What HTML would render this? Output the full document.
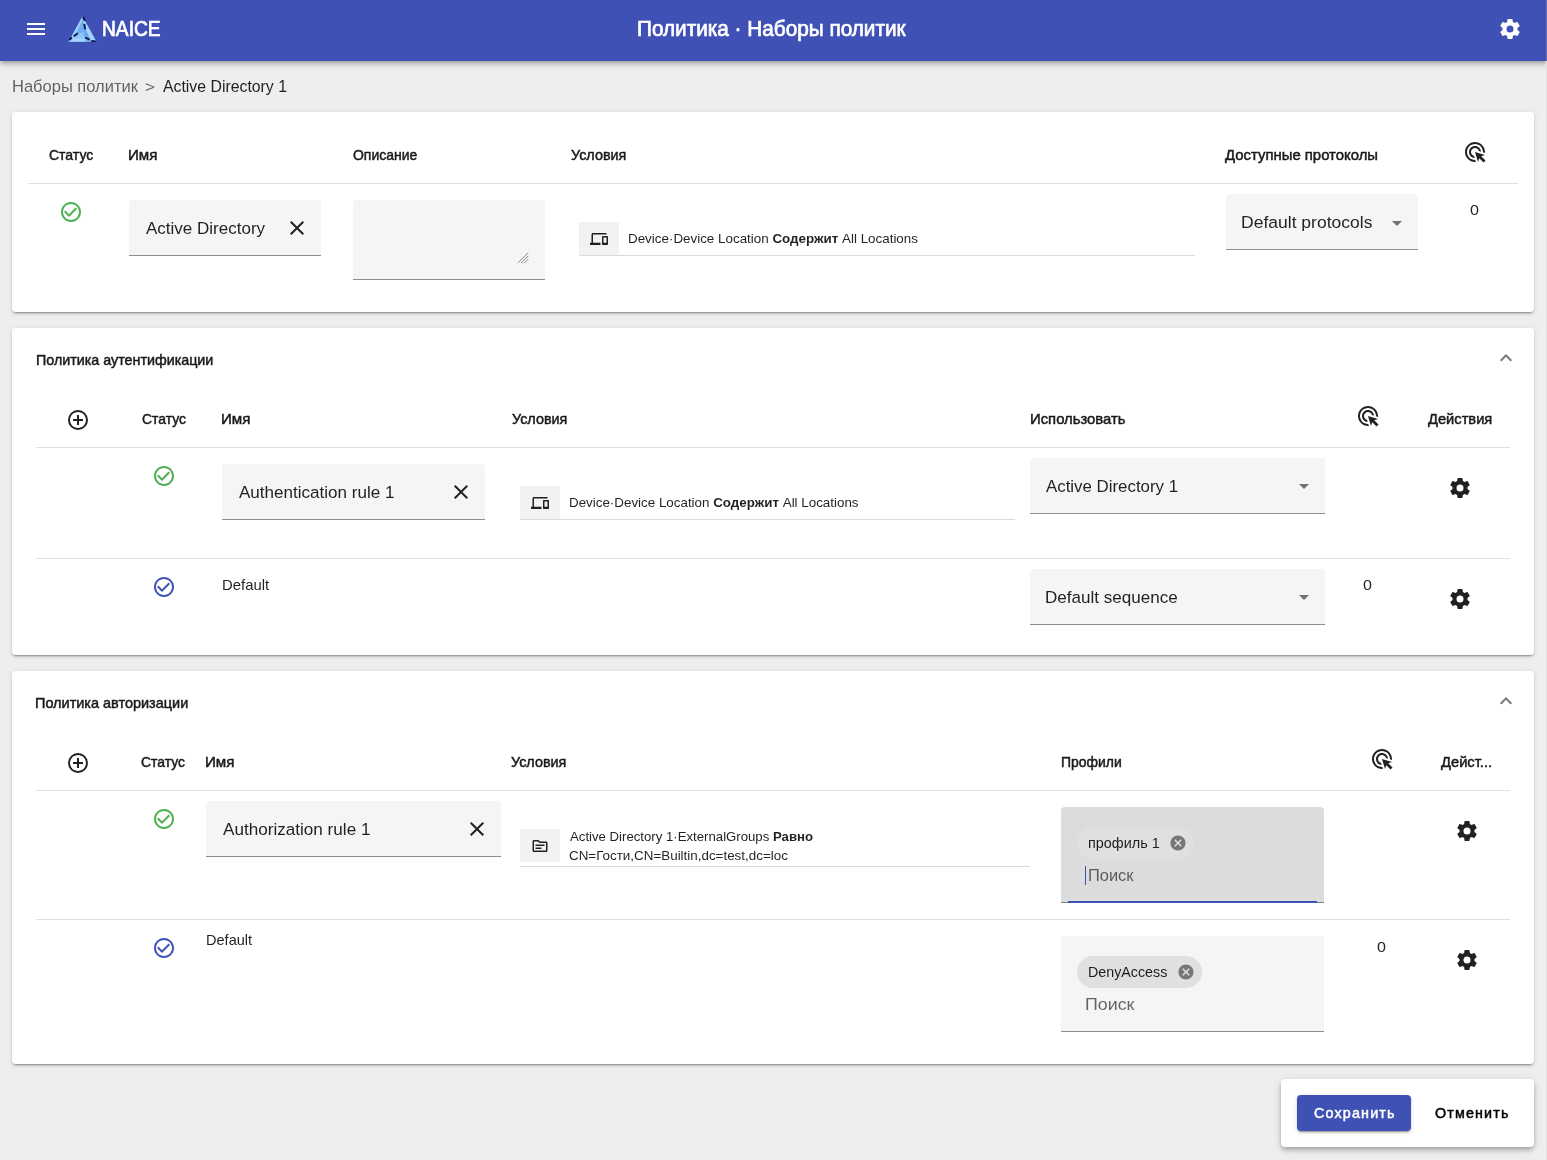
<!DOCTYPE html><html><head><meta charset="utf-8"><style>
html,body{margin:0;padding:0;width:1547px;height:1160px;overflow:hidden;background:#eeeeee;font-family:"Liberation Sans", sans-serif;}
.t{position:absolute;white-space:nowrap;line-height:1;transform-origin:0 0;}
.card{position:absolute;background:#fff;border-radius:4px;box-shadow:0 3px 1px -2px rgba(0,0,0,.2),0 2px 2px 0 rgba(0,0,0,.14),0 1px 5px 0 rgba(0,0,0,.12);}
.fld{position:absolute;background:#f5f5f5;border-radius:4px 4px 0 0;border-bottom:1px solid rgba(0,0,0,.42);box-sizing:border-box;}
.hr{position:absolute;height:1px;background:rgba(0,0,0,.12);}
#root{position:absolute;left:0;top:0;width:1547px;height:1160px;will-change:transform;}
</style></head><body><div id="root">
<div style="position:absolute;left:0;top:0;width:1547px;height:61px;background:#3f51b5;box-shadow:0 2px 4px -1px rgba(0,0,0,.2),0 4px 5px 0 rgba(0,0,0,.14),0 1px 10px 0 rgba(0,0,0,.12);"></div>
<svg style="position:absolute;left:24.00px;top:17.00px" width="24" height="24" viewBox="0 0 24 24"><path fill="#fff" d="M3,6H21V8H3V6M3,11H21V13H3V11M3,16H21V18H3V16Z"/></svg>
<div style="position:absolute;left:1546px;top:0;width:1px;height:61px;background:#6570bb"></div><div style="position:absolute;left:1546px;top:61px;width:1px;height:1099px;background:#e2e2e2"></div>
<svg style="position:absolute;left:64px;top:12px" width="36" height="34" viewBox="64 12 36 34">
<polygon points="82.5,16.2 68.5,41.7 96.4,41.5" fill="#a3d3ff"/>
<polygon points="82.6,19 75.5,34.5 83.5,32.6 85.5,29" fill="#74aef2"/>
<polygon points="83.5,32.6 75.5,34.5 72.5,38.5 85.2,38.8" fill="#8ec4fb"/>
<polygon points="72.5,38.5 85.2,38.8 85.6,41.6 69.5,41.6" fill="#a6d6ff"/>
<polygon points="85.5,29 83.5,32.6 85.2,38.8 90.5,39.8" fill="#6aa5ef"/>
<polygon points="85.2,38.8 90.5,39.8 93,41.5 85.6,41.6" fill="#74aef2"/>
<g stroke="#08144a" stroke-width="1.9" stroke-linecap="butt">
<line x1="82.9" y1="17" x2="85" y2="20.8"/>
<line x1="84.3" y1="23.8" x2="85.1" y2="29.3"/>
<line x1="73.7" y1="36.3" x2="77.8" y2="33.2"/>
<line x1="69.4" y1="40" x2="71.9" y2="37.4"/>
<line x1="85.2" y1="37.5" x2="89.5" y2="39.6"/>
<line x1="91.3" y1="40.9" x2="95.8" y2="41.4"/>
</g></svg>
<div id="t0" class="t" style="left:101.77px;top:17.72px;font-size:21.6px;font-weight:400;color:#fff;-webkit-text-stroke:0.72px #fff;transform:scaleX(0.8879);">NAICE</div>
<div id="t1" class="t" style="left:637.34px;top:17.72px;font-size:21.6px;font-weight:400;color:#fff;-webkit-text-stroke:0.72px #fff;transform:scaleX(0.9607);">Политика · Наборы политик</div>
<svg style="position:absolute;left:1498.00px;top:17.00px" width="24" height="24" viewBox="0 0 24 24"><path fill="#fff" d="M12,15.5A3.5,3.5 0 0,1 8.5,12A3.5,3.5 0 0,1 12,8.5A3.5,3.5 0 0,1 15.5,12A3.5,3.5 0 0,1 12,15.5M19.43,12.97C19.47,12.65 19.5,12.33 19.5,12C19.5,11.67 19.47,11.34 19.43,11L21.54,9.37C21.73,9.22 21.78,8.95 21.66,8.73L19.66,5.27C19.54,5.05 19.27,4.96 19.05,5.05L16.56,6.05C16.04,5.66 15.5,5.32 14.87,5.07L14.5,2.42C14.46,2.18 14.25,2 14,2H10C9.75,2 9.54,2.18 9.5,2.42L9.13,5.07C8.5,5.32 7.96,5.66 7.44,6.05L4.95,5.05C4.73,4.96 4.46,5.05 4.34,5.27L2.34,8.73C2.21,8.95 2.27,9.22 2.46,9.37L4.57,11C4.53,11.34 4.5,11.67 4.5,12C4.5,12.33 4.53,12.65 4.57,12.97L2.46,14.63C2.27,14.78 2.21,15.05 2.34,15.27L4.34,18.73C4.46,18.95 4.73,19.03 4.95,18.95L7.44,17.94C7.96,18.34 8.5,18.68 9.13,18.93L9.5,21.58C9.54,21.82 9.75,22 10,22H14C14.25,22 14.46,21.82 14.5,21.58L14.87,18.93C15.5,18.67 16.04,18.34 16.56,17.94L19.05,18.95C19.27,19.03 19.54,18.95 19.66,18.73L21.66,15.27C21.78,15.05 21.73,14.78 21.54,14.63L19.43,12.97Z"/></svg>
<div id="t2" class="t" style="left:11.67px;top:77.90px;font-size:16.3px;font-weight:400;color:rgba(0,0,0,.6);transform:scaleX(1.0132);">Наборы политик</div>
<div id="t3" class="t" style="left:144.86px;top:79.00px;font-size:15px;font-weight:400;color:rgba(0,0,0,.6);transform:scaleX(1.1429);">&gt;</div>
<div id="t4" class="t" style="left:162.61px;top:77.90px;font-size:16.3px;font-weight:400;color:rgba(0,0,0,.87);transform:scaleX(0.9717);">Active Directory 1</div>
<div class="card" style="left:12px;top:112px;width:1522px;height:200px"></div>
<div id="t5" class="t" style="left:48.63px;top:147.10px;font-size:15px;font-weight:400;color:rgba(0,0,0,.87);-webkit-text-stroke:0.50px rgba(0,0,0,.87);transform:scaleX(0.9331);">Статус</div>
<div id="t6" class="t" style="left:128.28px;top:147.10px;font-size:15px;font-weight:400;color:rgba(0,0,0,.87);-webkit-text-stroke:0.50px rgba(0,0,0,.87);transform:scaleX(1.0085);">Имя</div>
<div id="t7" class="t" style="left:353.21px;top:147.10px;font-size:15px;font-weight:400;color:rgba(0,0,0,.87);-webkit-text-stroke:0.50px rgba(0,0,0,.87);transform:scaleX(0.9305);">Описание</div>
<div id="t8" class="t" style="left:570.71px;top:147.10px;font-size:15px;font-weight:400;color:rgba(0,0,0,.87);-webkit-text-stroke:0.50px rgba(0,0,0,.87);transform:scaleX(0.9578);">Условия</div>
<div id="t9" class="t" style="left:1225.49px;top:147.10px;font-size:15px;font-weight:400;color:rgba(0,0,0,.87);-webkit-text-stroke:0.50px rgba(0,0,0,.87);transform:scaleX(0.9925);">Доступные протоколы</div>
<svg style="position:absolute;left:1463.00px;top:140.40px" width="24" height="24" viewBox="0 0 24 24"><path fill="rgba(0,0,0,.87)" d="M11.71,17.99C8.53,17.84,6,15.22,6,12c0-3.31,2.69-6,6-6c3.22,0,5.84,2.53,5.99,5.71l-2.1-0.63C15.48,9.31,13.89,8,12,8c-2.21,0-4,1.79-4,4c0,1.89,1.31,3.48,3.08,3.89L11.71,17.99z M22,12c0,0.3-0.01,0.6-0.04,0.9l-1.97-0.59C20,12.2,20,12.1,20,12c0-4.42-3.58-8-8-8s-8,3.58-8,8s3.58,8,8,8c0.1,0,0.2,0,0.31-0.01l0.59,1.97C12.6,21.99,12.3,22,12,22C6.48,22,2,17.52,2,12C2,6.48,6.48,2,12,2S22,6.48,22,12z M18.23,16.26L22,15l-10-3l3,10l1.26-3.77l4.27,4.27l1.98-1.98L18.23,16.26z"/></svg>
<div class="hr" style="left:28px;top:183px;width:1490px"></div>
<svg style="position:absolute;left:59.00px;top:199.50px" width="24" height="24" viewBox="0 0 24 24"><path fill="#4caf50" d="M16.59 7.58L10 14.17l-3.59-3.58L5 12l5 5 8-8zM12 2C6.48 2 2 6.48 2 12s4.48 10 10 10 10-4.48 10-10S17.52 2 12 2zm0 18c-4.42 0-8-3.58-8-8s3.58-8 8-8 8 3.58 8 8-3.58 8-8 8z"/></svg>
<div class="fld" style="left:129px;top:200px;width:192px;height:56px"></div>
<div id="t10" class="t" style="left:145.70px;top:220.78px;font-size:16.8px;font-weight:400;color:rgba(0,0,0,.87);transform:scaleX(1.0136);">Active Directory</div>
<svg style="position:absolute;left:284.70px;top:216.00px" width="24" height="24" viewBox="0 0 24 24"><path fill="rgba(0,0,0,.87)" d="M19,6.41L17.59,5L12,10.59L6.41,5L5,6.41L10.59,12L5,17.59L6.41,19L12,13.41L17.59,19L19,17.59L13.41,12L19,6.41Z"/></svg>
<div class="fld" style="left:353px;top:200px;width:192px;height:80px"></div>
<svg style="position:absolute;left:516px;top:251px" width="14" height="14" viewBox="516 251 14 14"><g stroke="#7a7a7a" stroke-width="0.9"><line x1="517.8" y1="263" x2="528.3" y2="252.6"/><line x1="521.2" y1="263" x2="528.3" y2="255.9"/><line x1="524.5" y1="263" x2="528.3" y2="259.2"/></g></svg>
<div style="position:absolute;left:579px;top:222px;width:40px;height:33px;background:#f1f2f4"></div>
<div class="hr" style="left:579px;top:255px;width:616px;background:rgba(0,0,0,.14)"></div>
<svg style="position:absolute;left:590.00px;top:230.00px" width="18" height="18" viewBox="0 0 24 24"><path fill="rgba(0,0,0,.87)" d="M4 6h18V4H4c-1.1 0-2 .9-2 2v11H0v3h14v-3H4V6zm19 2h-6c-.55 0-1 .45-1 1v10c0 .55.45 1 1 1h6c.55 0 1-.45 1-1V9c0-.55-.45-1-1-1zm-1 9h-4v-7h4v7z"/></svg>
<div id="t11" class="t" style="left:627.91px;top:231.77px;font-size:13.5px;font-weight:400;color:rgba(0,0,0,.87);transform:scaleX(0.9919);">Device·Device Location <b>Содержит</b> All Locations</div>
<div class="fld" style="left:1226px;top:194px;width:192px;height:56px"></div>
<div id="t12" class="t" style="left:1240.94px;top:214.98px;font-size:16.8px;font-weight:400;color:rgba(0,0,0,.87);transform:scaleX(1.0437);">Default protocols</div>
<svg style="position:absolute;left:1385.00px;top:210.50px" width="24" height="24" viewBox="0 0 24 24"><path fill="rgba(0,0,0,.54)" d="M7,10L12,15L17,10H7Z"/></svg>
<div id="t13" class="t" style="left:1470.24px;top:202.10px;font-size:15px;font-weight:400;color:rgba(0,0,0,.87);transform:scaleX(1.0711);">0</div>
<div class="card" style="left:12px;top:328px;width:1522px;height:327px"></div>
<div id="t14" class="t" style="left:35.51px;top:351.90px;font-size:15px;font-weight:400;color:rgba(0,0,0,.87);-webkit-text-stroke:0.50px rgba(0,0,0,.87);transform:scaleX(0.9527);">Политика аутентификации</div>
<svg style="position:absolute;left:1494.00px;top:346.00px" width="24" height="24" viewBox="0 0 24 24"><path fill="rgba(0,0,0,.54)" d="M7.41,15.41L12,10.83L16.59,15.41L18,14L12,8L6,14L7.41,15.41Z"/></svg>
<svg style="position:absolute;left:66.10px;top:408.20px" width="24" height="24" viewBox="0 0 24 24"><path fill="rgba(0,0,0,.87)" d="M12,20C7.59,20 4,16.41 4,12C4,7.59 7.59,4 12,4C16.41,4 20,7.59 20,12C20,16.41 16.41,20 12,20M12,2A10,10 0 0,0 2,12A10,10 0 0,0 12,22A10,10 0 0,0 22,12A10,10 0 0,0 12,2M13,7H11V11H7V13H11V17H13V13H17V11H13V7Z"/></svg>
<div id="t15" class="t" style="left:141.71px;top:411.10px;font-size:15px;font-weight:400;color:rgba(0,0,0,.87);-webkit-text-stroke:0.50px rgba(0,0,0,.87);transform:scaleX(0.9285);">Статус</div>
<div id="t16" class="t" style="left:221.45px;top:411.10px;font-size:15px;font-weight:400;color:rgba(0,0,0,.87);-webkit-text-stroke:0.50px rgba(0,0,0,.87);transform:scaleX(1.0085);">Имя</div>
<div id="t17" class="t" style="left:511.61px;top:411.10px;font-size:15px;font-weight:400;color:rgba(0,0,0,.87);-webkit-text-stroke:0.50px rgba(0,0,0,.87);transform:scaleX(0.9578);">Условия</div>
<div id="t18" class="t" style="left:1030.01px;top:411.10px;font-size:15px;font-weight:400;color:rgba(0,0,0,.87);-webkit-text-stroke:0.50px rgba(0,0,0,.87);transform:scaleX(0.9895);">Использовать</div>
<svg style="position:absolute;left:1355.50px;top:403.50px" width="24" height="24" viewBox="0 0 24 24"><path fill="rgba(0,0,0,.87)" d="M11.71,17.99C8.53,17.84,6,15.22,6,12c0-3.31,2.69-6,6-6c3.22,0,5.84,2.53,5.99,5.71l-2.1-0.63C15.48,9.31,13.89,8,12,8c-2.21,0-4,1.79-4,4c0,1.89,1.31,3.48,3.08,3.89L11.71,17.99z M22,12c0,0.3-0.01,0.6-0.04,0.9l-1.97-0.59C20,12.2,20,12.1,20,12c0-4.42-3.58-8-8-8s-8,3.58-8,8s3.58,8,8,8c0.1,0,0.2,0,0.31-0.01l0.59,1.97C12.6,21.99,12.3,22,12,22C6.48,22,2,17.52,2,12C2,6.48,6.48,2,12,2S22,6.48,22,12z M18.23,16.26L22,15l-10-3l3,10l1.26-3.77l4.27,4.27l1.98-1.98L18.23,16.26z"/></svg>
<div id="t19" class="t" style="left:1428.10px;top:411.10px;font-size:15px;font-weight:400;color:rgba(0,0,0,.87);-webkit-text-stroke:0.50px rgba(0,0,0,.87);transform:scaleX(0.9786);">Действия</div>
<div class="hr" style="left:36px;top:447px;width:1474px"></div>
<svg style="position:absolute;left:151.90px;top:463.60px" width="24" height="24" viewBox="0 0 24 24"><path fill="#4caf50" d="M16.59 7.58L10 14.17l-3.59-3.58L5 12l5 5 8-8zM12 2C6.48 2 2 6.48 2 12s4.48 10 10 10 10-4.48 10-10S17.52 2 12 2zm0 18c-4.42 0-8-3.58-8-8s3.58-8 8-8 8 3.58 8 8-3.58 8-8 8z"/></svg>
<div class="fld" style="left:222px;top:464px;width:263px;height:56px"></div>
<div id="t20" class="t" style="left:238.59px;top:484.78px;font-size:16.8px;font-weight:400;color:rgba(0,0,0,.87);transform:scaleX(1.0159);">Authentication rule 1</div>
<svg style="position:absolute;left:449.00px;top:480.00px" width="24" height="24" viewBox="0 0 24 24"><path fill="rgba(0,0,0,.87)" d="M19,6.41L17.59,5L12,10.59L6.41,5L5,6.41L10.59,12L5,17.59L6.41,19L12,13.41L17.59,19L19,17.59L13.41,12L19,6.41Z"/></svg>
<div style="position:absolute;left:520px;top:486px;width:40px;height:33px;background:#f1f2f4"></div>
<div class="hr" style="left:520px;top:519px;width:495px;background:rgba(0,0,0,.14)"></div>
<svg style="position:absolute;left:531.00px;top:493.50px" width="18" height="18" viewBox="0 0 24 24"><path fill="rgba(0,0,0,.87)" d="M4 6h18V4H4c-1.1 0-2 .9-2 2v11H0v3h14v-3H4V6zm19 2h-6c-.55 0-1 .45-1 1v10c0 .55.45 1 1 1h6c.55 0 1-.45 1-1V9c0-.55-.45-1-1-1zm-1 9h-4v-7h4v7z"/></svg>
<div id="t21" class="t" style="left:569.01px;top:496.17px;font-size:13.5px;font-weight:400;color:rgba(0,0,0,.87);transform:scaleX(0.9904);">Device·Device Location <b>Содержит</b> All Locations</div>
<div class="fld" style="left:1030px;top:458px;width:295px;height:56px"></div>
<div id="t22" class="t" style="left:1045.80px;top:478.78px;font-size:16.8px;font-weight:400;color:rgba(0,0,0,.87);transform:scaleX(1.0044);">Active Directory 1</div>
<svg style="position:absolute;left:1292.00px;top:474.00px" width="24" height="24" viewBox="0 0 24 24"><path fill="rgba(0,0,0,.54)" d="M7,10L12,15L17,10H7Z"/></svg>
<svg style="position:absolute;left:1448.00px;top:476.40px" width="24" height="24" viewBox="0 0 24 24"><path fill="rgba(0,0,0,.87)" d="M12,15.5A3.5,3.5 0 0,1 8.5,12A3.5,3.5 0 0,1 12,8.5A3.5,3.5 0 0,1 15.5,12A3.5,3.5 0 0,1 12,15.5M19.43,12.97C19.47,12.65 19.5,12.33 19.5,12C19.5,11.67 19.47,11.34 19.43,11L21.54,9.37C21.73,9.22 21.78,8.95 21.66,8.73L19.66,5.27C19.54,5.05 19.27,4.96 19.05,5.05L16.56,6.05C16.04,5.66 15.5,5.32 14.87,5.07L14.5,2.42C14.46,2.18 14.25,2 14,2H10C9.75,2 9.54,2.18 9.5,2.42L9.13,5.07C8.5,5.32 7.96,5.66 7.44,6.05L4.95,5.05C4.73,4.96 4.46,5.05 4.34,5.27L2.34,8.73C2.21,8.95 2.27,9.22 2.46,9.37L4.57,11C4.53,11.34 4.5,11.67 4.5,12C4.5,12.33 4.53,12.65 4.57,12.97L2.46,14.63C2.27,14.78 2.21,15.05 2.34,15.27L4.34,18.73C4.46,18.95 4.73,19.03 4.95,18.95L7.44,17.94C7.96,18.34 8.5,18.68 9.13,18.93L9.5,21.58C9.54,21.82 9.75,22 10,22H14C14.25,22 14.46,21.82 14.5,21.58L14.87,18.93C15.5,18.67 16.04,18.34 16.56,17.94L19.05,18.95C19.27,19.03 19.54,18.95 19.66,18.73L21.66,15.27C21.78,15.05 21.73,14.78 21.54,14.63L19.43,12.97Z"/></svg>
<div class="hr" style="left:36px;top:558px;width:1474px"></div>
<svg style="position:absolute;left:151.90px;top:574.60px" width="24" height="24" viewBox="0 0 24 24"><path fill="#3f51b5" d="M16.59 7.58L10 14.17l-3.59-3.58L5 12l5 5 8-8zM12 2C6.48 2 2 6.48 2 12s4.48 10 10 10 10-4.48 10-10S17.52 2 12 2zm0 18c-4.42 0-8-3.58-8-8s3.58-8 8-8 8 3.58 8 8-3.58 8-8 8z"/></svg>
<div id="t23" class="t" style="left:221.52px;top:577.30px;font-size:15px;font-weight:400;color:rgba(0,0,0,.87);transform:scaleX(0.9917);">Default</div>
<div class="fld" style="left:1030px;top:569px;width:295px;height:56px"></div>
<div id="t24" class="t" style="left:1045.47px;top:589.78px;font-size:16.8px;font-weight:400;color:rgba(0,0,0,.87);transform:scaleX(1.0169);">Default sequence</div>
<svg style="position:absolute;left:1292.00px;top:585.00px" width="24" height="24" viewBox="0 0 24 24"><path fill="rgba(0,0,0,.54)" d="M7,10L12,15L17,10H7Z"/></svg>
<div id="t25" class="t" style="left:1362.54px;top:577.10px;font-size:15px;font-weight:400;color:rgba(0,0,0,.87);transform:scaleX(1.0711);">0</div>
<svg style="position:absolute;left:1448.00px;top:587.00px" width="24" height="24" viewBox="0 0 24 24"><path fill="rgba(0,0,0,.87)" d="M12,15.5A3.5,3.5 0 0,1 8.5,12A3.5,3.5 0 0,1 12,8.5A3.5,3.5 0 0,1 15.5,12A3.5,3.5 0 0,1 12,15.5M19.43,12.97C19.47,12.65 19.5,12.33 19.5,12C19.5,11.67 19.47,11.34 19.43,11L21.54,9.37C21.73,9.22 21.78,8.95 21.66,8.73L19.66,5.27C19.54,5.05 19.27,4.96 19.05,5.05L16.56,6.05C16.04,5.66 15.5,5.32 14.87,5.07L14.5,2.42C14.46,2.18 14.25,2 14,2H10C9.75,2 9.54,2.18 9.5,2.42L9.13,5.07C8.5,5.32 7.96,5.66 7.44,6.05L4.95,5.05C4.73,4.96 4.46,5.05 4.34,5.27L2.34,8.73C2.21,8.95 2.27,9.22 2.46,9.37L4.57,11C4.53,11.34 4.5,11.67 4.5,12C4.5,12.33 4.53,12.65 4.57,12.97L2.46,14.63C2.27,14.78 2.21,15.05 2.34,15.27L4.34,18.73C4.46,18.95 4.73,19.03 4.95,18.95L7.44,17.94C7.96,18.34 8.5,18.68 9.13,18.93L9.5,21.58C9.54,21.82 9.75,22 10,22H14C14.25,22 14.46,21.82 14.5,21.58L14.87,18.93C15.5,18.67 16.04,18.34 16.56,17.94L19.05,18.95C19.27,19.03 19.54,18.95 19.66,18.73L21.66,15.27C21.78,15.05 21.73,14.78 21.54,14.63L19.43,12.97Z"/></svg>
<div class="card" style="left:12px;top:671px;width:1522px;height:393px"></div>
<div id="t26" class="t" style="left:35.36px;top:695.40px;font-size:15px;font-weight:400;color:rgba(0,0,0,.87);-webkit-text-stroke:0.50px rgba(0,0,0,.87);transform:scaleX(0.9644);">Политика авторизации</div>
<svg style="position:absolute;left:1494.00px;top:689.00px" width="24" height="24" viewBox="0 0 24 24"><path fill="rgba(0,0,0,.54)" d="M7.41,15.41L12,10.83L16.59,15.41L18,14L12,8L6,14L7.41,15.41Z"/></svg>
<svg style="position:absolute;left:66.10px;top:750.80px" width="24" height="24" viewBox="0 0 24 24"><path fill="rgba(0,0,0,.87)" d="M12,20C7.59,20 4,16.41 4,12C4,7.59 7.59,4 12,4C16.41,4 20,7.59 20,12C20,16.41 16.41,20 12,20M12,2A10,10 0 0,0 2,12A10,10 0 0,0 12,22A10,10 0 0,0 22,12A10,10 0 0,0 12,2M13,7H11V11H7V13H11V17H13V13H17V11H13V7Z"/></svg>
<div id="t27" class="t" style="left:141.06px;top:753.83px;font-size:15px;font-weight:400;color:rgba(0,0,0,.87);-webkit-text-stroke:0.50px rgba(0,0,0,.87);transform:scaleX(0.9272);">Статус</div>
<div id="t28" class="t" style="left:205.01px;top:753.74px;font-size:15px;font-weight:400;color:rgba(0,0,0,.87);-webkit-text-stroke:0.50px rgba(0,0,0,.87);transform:scaleX(1.0085);">Имя</div>
<div id="t29" class="t" style="left:511.00px;top:753.70px;font-size:15px;font-weight:400;color:rgba(0,0,0,.87);-webkit-text-stroke:0.50px rgba(0,0,0,.87);transform:scaleX(0.9581);">Условия</div>
<div id="t30" class="t" style="left:1061.20px;top:753.70px;font-size:15px;font-weight:400;color:rgba(0,0,0,.87);-webkit-text-stroke:0.50px rgba(0,0,0,.87);transform:scaleX(0.9304);">Профили</div>
<svg style="position:absolute;left:1370.10px;top:747.00px" width="24" height="24" viewBox="0 0 24 24"><path fill="rgba(0,0,0,.87)" d="M11.71,17.99C8.53,17.84,6,15.22,6,12c0-3.31,2.69-6,6-6c3.22,0,5.84,2.53,5.99,5.71l-2.1-0.63C15.48,9.31,13.89,8,12,8c-2.21,0-4,1.79-4,4c0,1.89,1.31,3.48,3.08,3.89L11.71,17.99z M22,12c0,0.3-0.01,0.6-0.04,0.9l-1.97-0.59C20,12.2,20,12.1,20,12c0-4.42-3.58-8-8-8s-8,3.58-8,8s3.58,8,8,8c0.1,0,0.2,0,0.31-0.01l0.59,1.97C12.6,21.99,12.3,22,12,22C6.48,22,2,17.52,2,12C2,6.48,6.48,2,12,2S22,6.48,22,12z M18.23,16.26L22,15l-10-3l3,10l1.26-3.77l4.27,4.27l1.98-1.98L18.23,16.26z"/></svg>
<div id="t31" class="t" style="left:1440.90px;top:753.70px;font-size:15px;font-weight:400;color:rgba(0,0,0,.87);-webkit-text-stroke:0.50px rgba(0,0,0,.87);transform:scaleX(0.9804);">Дейст...</div>
<div class="hr" style="left:36px;top:790px;width:1474px"></div>
<svg style="position:absolute;left:151.60px;top:806.70px" width="24" height="24" viewBox="0 0 24 24"><path fill="#4caf50" d="M16.59 7.58L10 14.17l-3.59-3.58L5 12l5 5 8-8zM12 2C6.48 2 2 6.48 2 12s4.48 10 10 10 10-4.48 10-10S17.52 2 12 2zm0 18c-4.42 0-8-3.58-8-8s3.58-8 8-8 8 3.58 8 8-3.58 8-8 8z"/></svg>
<div class="fld" style="left:206px;top:801px;width:295px;height:56px"></div>
<div id="t32" class="t" style="left:222.70px;top:821.78px;font-size:16.8px;font-weight:400;color:rgba(0,0,0,.87);transform:scaleX(1.0196);">Authorization rule 1</div>
<svg style="position:absolute;left:464.70px;top:817.10px" width="24" height="24" viewBox="0 0 24 24"><path fill="rgba(0,0,0,.87)" d="M19,6.41L17.59,5L12,10.59L6.41,5L5,6.41L10.59,12L5,17.59L6.41,19L12,13.41L17.59,19L19,17.59L13.41,12L19,6.41Z"/></svg>
<div style="position:absolute;left:520px;top:829px;width:40px;height:33px;background:#f1f2f4"></div>
<div class="hr" style="left:520px;top:866px;width:510px;background:rgba(0,0,0,.14)"></div>
<svg style="position:absolute;left:530.50px;top:837.00px" width="18" height="18" viewBox="0 0 24 24"><path fill="rgba(0,0,0,.87)" d="M20 6h-8l-2-2H4c-1.1 0-1.99.9-1.99 2L2 18c0 1.1.9 2 2 2h16c1.1 0 2-.9 2-2V8c0-1.1-.9-2-2-2zm0 12H4V6h5.17l2 2H20v10zm-2-6H6v-2h12v2zm-4 4H6v-2h8v2z"/></svg>
<div id="t33" class="t" style="left:570.00px;top:829.77px;font-size:13.5px;font-weight:400;color:rgba(0,0,0,.87);transform:scaleX(0.9766);">Active Directory 1·ExternalGroups <b>Равно</b></div>
<div id="t34" class="t" style="left:569.01px;top:849.47px;font-size:13.5px;font-weight:400;color:rgba(0,0,0,.87);transform:scaleX(0.9928);">CN=Гости,CN=Builtin,dc=test,dc=loc</div>
<div class="fld" style="left:1061px;top:807px;width:263px;height:96px;background:#dcdcdc"></div>
<div style="position:absolute;left:1068px;top:901px;width:249px;height:2px;background:#3f51b5"></div>
<div style="position:absolute;left:1077px;top:827px;width:117px;height:32px;border-radius:16px;background:#e0e0e0"></div>
<div id="t35" class="t" style="left:1088.03px;top:835.40px;font-size:15px;font-weight:400;color:rgba(0,0,0,.87);transform:scaleX(0.9619);">профиль 1</div>
<svg style="position:absolute;left:1169.30px;top:833.70px" width="18" height="18" viewBox="0 0 24 24"><path fill="rgba(0,0,0,.47)" d="M12,2C17.53,2 22,6.47 22,12C22,17.53 17.53,22 12,22C6.47,22 2,17.53 2,12C2,6.47 6.47,2 12,2M15.59,7L12,10.59L8.41,7L7,8.41L10.59,12L7,15.59L8.41,17L12,13.41L15.59,17L17,15.59L13.41,12L17,8.41L15.59,7Z"/></svg>
<div id="t36" class="t" style="left:1088.49px;top:868.08px;font-size:16.8px;font-weight:400;color:rgba(0,0,0,.6);transform:scaleX(0.9771);">Поиск</div>
<div style="position:absolute;left:1085px;top:866px;width:1px;height:19px;background:#3f51b5"></div>
<svg style="position:absolute;left:1455.30px;top:819.00px" width="24" height="24" viewBox="0 0 24 24"><path fill="rgba(0,0,0,.87)" d="M12,15.5A3.5,3.5 0 0,1 8.5,12A3.5,3.5 0 0,1 12,8.5A3.5,3.5 0 0,1 15.5,12A3.5,3.5 0 0,1 12,15.5M19.43,12.97C19.47,12.65 19.5,12.33 19.5,12C19.5,11.67 19.47,11.34 19.43,11L21.54,9.37C21.73,9.22 21.78,8.95 21.66,8.73L19.66,5.27C19.54,5.05 19.27,4.96 19.05,5.05L16.56,6.05C16.04,5.66 15.5,5.32 14.87,5.07L14.5,2.42C14.46,2.18 14.25,2 14,2H10C9.75,2 9.54,2.18 9.5,2.42L9.13,5.07C8.5,5.32 7.96,5.66 7.44,6.05L4.95,5.05C4.73,4.96 4.46,5.05 4.34,5.27L2.34,8.73C2.21,8.95 2.27,9.22 2.46,9.37L4.57,11C4.53,11.34 4.5,11.67 4.5,12C4.5,12.33 4.53,12.65 4.57,12.97L2.46,14.63C2.27,14.78 2.21,15.05 2.34,15.27L4.34,18.73C4.46,18.95 4.73,19.03 4.95,18.95L7.44,17.94C7.96,18.34 8.5,18.68 9.13,18.93L9.5,21.58C9.54,21.82 9.75,22 10,22H14C14.25,22 14.46,21.82 14.5,21.58L14.87,18.93C15.5,18.67 16.04,18.34 16.56,17.94L19.05,18.95C19.27,19.03 19.54,18.95 19.66,18.73L21.66,15.27C21.78,15.05 21.73,14.78 21.54,14.63L19.43,12.97Z"/></svg>
<div class="hr" style="left:36px;top:919px;width:1474px"></div>
<svg style="position:absolute;left:151.60px;top:935.90px" width="24" height="24" viewBox="0 0 24 24"><path fill="#3f51b5" d="M16.59 7.58L10 14.17l-3.59-3.58L5 12l5 5 8-8zM12 2C6.48 2 2 6.48 2 12s4.48 10 10 10 10-4.48 10-10S17.52 2 12 2zm0 18c-4.42 0-8-3.58-8-8s3.58-8 8-8 8 3.58 8 8-3.58 8-8 8z"/></svg>
<div id="t37" class="t" style="left:206.12px;top:932.00px;font-size:15px;font-weight:400;color:rgba(0,0,0,.87);transform:scaleX(0.9699);">Default</div>
<div class="fld" style="left:1061px;top:936px;width:263px;height:96px"></div>
<div style="position:absolute;left:1077px;top:956px;width:125px;height:32px;border-radius:16px;background:#e0e0e0"></div>
<div id="t38" class="t" style="left:1088.05px;top:964.30px;font-size:15px;font-weight:400;color:rgba(0,0,0,.87);transform:scaleX(0.9512);">DenyAccess</div>
<svg style="position:absolute;left:1176.90px;top:962.80px" width="18" height="18" viewBox="0 0 24 24"><path fill="rgba(0,0,0,.47)" d="M12,2C17.53,2 22,6.47 22,12C22,17.53 17.53,22 12,22C6.47,22 2,17.53 2,12C2,6.47 6.47,2 12,2M15.59,7L12,10.59L8.41,7L7,8.41L10.59,12L7,15.59L8.41,17L12,13.41L15.59,17L17,15.59L13.41,12L17,8.41L15.59,7Z"/></svg>
<div id="t39" class="t" style="left:1084.51px;top:997.08px;font-size:16.8px;font-weight:400;color:rgba(0,0,0,.6);transform:scaleX(1.0625);">Поиск</div>
<div id="t40" class="t" style="left:1376.93px;top:938.50px;font-size:15px;font-weight:400;color:rgba(0,0,0,.87);transform:scaleX(1.0711);">0</div>
<svg style="position:absolute;left:1455.30px;top:947.70px" width="24" height="24" viewBox="0 0 24 24"><path fill="rgba(0,0,0,.87)" d="M12,15.5A3.5,3.5 0 0,1 8.5,12A3.5,3.5 0 0,1 12,8.5A3.5,3.5 0 0,1 15.5,12A3.5,3.5 0 0,1 12,15.5M19.43,12.97C19.47,12.65 19.5,12.33 19.5,12C19.5,11.67 19.47,11.34 19.43,11L21.54,9.37C21.73,9.22 21.78,8.95 21.66,8.73L19.66,5.27C19.54,5.05 19.27,4.96 19.05,5.05L16.56,6.05C16.04,5.66 15.5,5.32 14.87,5.07L14.5,2.42C14.46,2.18 14.25,2 14,2H10C9.75,2 9.54,2.18 9.5,2.42L9.13,5.07C8.5,5.32 7.96,5.66 7.44,6.05L4.95,5.05C4.73,4.96 4.46,5.05 4.34,5.27L2.34,8.73C2.21,8.95 2.27,9.22 2.46,9.37L4.57,11C4.53,11.34 4.5,11.67 4.5,12C4.5,12.33 4.53,12.65 4.57,12.97L2.46,14.63C2.27,14.78 2.21,15.05 2.34,15.27L4.34,18.73C4.46,18.95 4.73,19.03 4.95,18.95L7.44,17.94C7.96,18.34 8.5,18.68 9.13,18.93L9.5,21.58C9.54,21.82 9.75,22 10,22H14C14.25,22 14.46,21.82 14.5,21.58L14.87,18.93C15.5,18.67 16.04,18.34 16.56,17.94L19.05,18.95C19.27,19.03 19.54,18.95 19.66,18.73L21.66,15.27C21.78,15.05 21.73,14.78 21.54,14.63L19.43,12.97Z"/></svg>
<div class="card" style="left:1281px;top:1079px;width:253px;height:68px;box-shadow:0 2px 4px -1px rgba(0,0,0,.2),0 4px 5px 0 rgba(0,0,0,.14),0 1px 10px 0 rgba(0,0,0,.12)"></div>
<div style="position:absolute;left:1297px;top:1095px;width:114px;height:36px;border-radius:4px;background:#3f51b5;box-shadow:0 3px 1px -2px rgba(0,0,0,.2),0 2px 2px 0 rgba(0,0,0,.14),0 1px 5px 0 rgba(0,0,0,.12)"></div>
<div id="t41" class="t" style="left:1313.52px;top:1105.30px;font-size:15px;font-weight:400;color:#fff;-webkit-text-stroke:0.50px #fff;transform:scaleX(0.9568);letter-spacing:1.2px;">Сохранить</div>
<div id="t42" class="t" style="left:1435.00px;top:1105.30px;font-size:15px;font-weight:400;color:#000;-webkit-text-stroke:0.50px #000;transform:scaleX(0.9532);letter-spacing:1.2px;">Отменить</div>
</div></body></html>
